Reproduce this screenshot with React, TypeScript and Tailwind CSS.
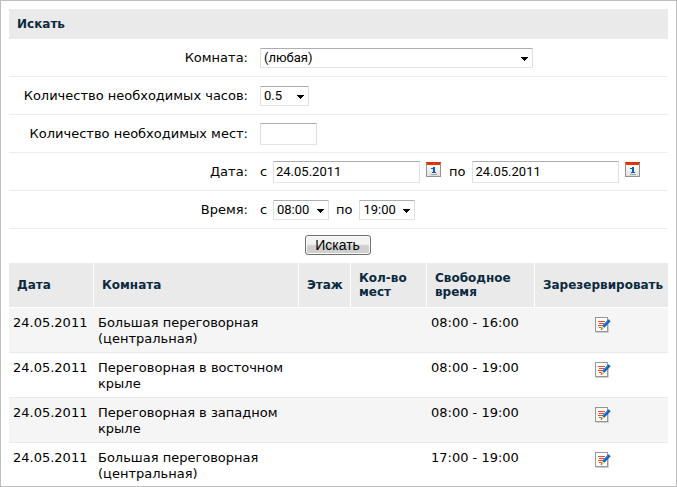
import { useId, type ReactNode } from "react";

type Slot = { date: string; room: string; time: string };

const slots: Slot[] = [
  { date: "24.05.2011", room: "Большая переговорная (центральная)", time: "08:00 - 16:00" },
  { date: "24.05.2011", room: "Переговорная в восточном крыле", time: "08:00 - 19:00" },
  { date: "24.05.2011", room: "Переговорная в западном крыле", time: "08:00 - 19:00" },
  { date: "24.05.2011", room: "Большая переговорная (центральная)", time: "17:00 - 19:00" },
];

const box =
  "rounded-[1px] border border-[#e2e3ea] border-t-[#abadb3] border-x-[#dbdfe6] bg-white font-['Roboto','Liberation_Sans',sans-serif] text-[13px] text-black";

function Select({ id, options, width }: { id: string; options: string[]; width: string }) {
  return (
    <span className={`relative inline-flex ${width}`}>
      <select id={id} className={`h-5 w-full appearance-none pl-[3px] leading-[18px] ${box}`}>
        {options.map((o) => (
          <option key={o}>{o}</option>
        ))}
      </select>
      <svg className="pointer-events-none absolute right-[5px] top-[9px]" width="7" height="4" shapeRendering="crispEdges" aria-hidden="true">
        <path d="M0 0h7v1H0zM1 1h5v1H1zM2 2h3v1H2zM3 3h1v1H3z" />
      </svg>
    </span>
  );
}

function CalendarButton({ label }: { label: string }) {
  const shade = useId();
  return (
    <button type="button" aria-label={label} className="mb-1 ml-[6px] mr-2 shrink-0">
      <svg width="15" height="15" viewBox="0 0 15 15" shapeRendering="crispEdges">
        <defs>
          <linearGradient id={shade} x1="0" y1="0" x2="0" y2="1">
            <stop offset="0" stopColor="#ffffff" />
            <stop offset="1" stopColor="#dedede" />
          </linearGradient>
        </defs>
        <rect width="15" height="15" fill="#929292" />
        <rect x="1" y="3" width="13" height="11" fill={`url(#${shade})`} />
        <rect x="1" y="1" width="13" height="2" fill="#f03208" />
        <rect x="0" y="0" width="15" height="1" fill="#d02f08" />
        <path d="M7 5h2v5H7zM5 6h2v1H5zM6 10h4v1H6z" fill="#0a5cc4" />
        <rect x="5" y="12" width="6" height="1" fill="#a5a5a5" />
      </svg>
    </button>
  );
}

function ReserveIcon() {
  return (
    <svg width="16" height="16" viewBox="0 0 16 16" aria-hidden="true">
      <path d="M1 15.5h12.5V5" fill="none" stroke="#cfcfcf" />
      <rect x=".5" y=".5" width="12" height="14" fill="#fff" stroke="#969696" />
      <path d="M3 4.5h7M4 6.5h5M3 8.5h5M4 10.5h3" stroke="#f04a20" />
      <path d="M14.6 3.2 8.2 9.8" stroke="#0c62c7" strokeWidth="3" />
      <path d="m12.8 3.8-5 5.2" stroke="#4a98e8" strokeWidth=".8" />
      <path d="m6.8 9.3 2.4 2.2-3.4 1.3z" fill="#e3c64a" />
      <path d="m6.3 11-.7 2 1.8-.7z" fill="#4b4b3a" />
    </svg>
  );
}

function Field({ id, label, children }: { id: string; label: string; children: ReactNode }) {
  return (
    <div className="flex h-[38px] items-center gap-3 border-b border-[#ededed]">
      <label htmlFor={id} className="w-[239px] shrink-0 text-right">
        {label}
      </label>
      <div className="flex items-center">{children}</div>
    </div>
  );
}

export default function App() {
  const input = `h-[22px] w-[147px] px-[2px] ${box}`;
  const head =
    "border-b border-r border-white bg-[#eaeaea] px-2 text-left text-[12px] leading-[14px] font-bold text-[#0b2a40] last:border-r-0";
  return (
    <main className="w-full border border-[#bdbdbd] bg-white px-2 pt-2 font-['Verdana','DejaVu_Sans',sans-serif] text-[13px] leading-4 text-black">
      <form onSubmit={(e) => e.preventDefault()}>
        <h1 className="h-[30px] bg-[#eaeaea] px-2 text-[12px] leading-[30px] font-bold text-[#0b2a40]">Искать</h1>
        <Field id="room" label="Комната:">
          <Select id="room" options={["(любая)"]} width="w-[273px]" />
        </Field>
        <Field id="hours" label="Количество необходимых часов:">
          <Select id="hours" options={["0.5"]} width="w-[49px]" />
        </Field>
        <Field id="seats" label="Количество необходимых мест:">
          <input id="seats" type="text" className={`h-[22px] w-[57px] px-[2px] ${box}`} />
        </Field>
        <Field id="date-from" label="Дата:">
          <span className="w-[13px]">с</span>
          <input id="date-from" type="text" defaultValue="24.05.2011" className={input} />
          <CalendarButton label="Выбрать дату начала" />
          <label htmlFor="date-to" className="mr-[7px]">по</label>
          <input id="date-to" type="text" defaultValue="24.05.2011" className={input} />
          <CalendarButton label="Выбрать дату окончания" />
        </Field>
        <Field id="time-from" label="Время:">
          <span className="w-[13px]">с</span>
          <Select id="time-from" options={["08:00"]} width="w-14" />
          <label htmlFor="time-to" className="mx-[7px]">по</label>
          <Select id="time-to" options={["19:00"]} width="w-14" />
        </Field>
        <div className="flex justify-center pt-[6px] pr-[2px] pb-2">
          <button
            type="submit"
            className="h-5 w-[66px] rounded-[3px] border border-[#707070] bg-linear-to-b from-[#f2f2f2] from-45% to-[#cfcfcf] to-55% font-['Liberation_Sans',sans-serif] text-[14px] leading-[18px] shadow-[inset_0_0_0_1px_#fafafa]"
          >
            Искать
          </button>
        </div>
      </form>
      <table className="w-full table-fixed border-separate border-spacing-0">
        <colgroup>
          <col className="w-[85px]" />
          <col className="w-[205px]" />
          <col className="w-[52px]" />
          <col className="w-[76px]" />
          <col className="w-[108px]" />
          <col />
        </colgroup>
        <thead>
          <tr className="h-[45px]">
            <th className={head}>Дата</th>
            <th className={head}>Комната</th>
            <th className={head}>Этаж</th>
            <th className={head}>Кол-во мест</th>
            <th className={head}>Свободное время</th>
            <th className={head}>Зарезервировать</th>
          </tr>
        </thead>
        <tbody className="[&_td]:border-b [&_td]:border-[#e9e9e9] [&_td]:px-1 [&_td]:pt-[7px] [&_td]:pb-[5px] [&_td]:align-top [&_tr:last-child_td]:border-b-0 [&_tr:last-child_td]:pb-1">
          {slots.map((s, i) => (
            <tr key={i} className="odd:bg-[#f5f5f5]">
              <td className="whitespace-nowrap">{s.date}</td>
              <td>{s.room}</td>
              <td />
              <td />
              <td className="whitespace-nowrap">{s.time}</td>
              <td>
                <a href="#reserve" aria-label="Зарезервировать" className="flex justify-center pt-[2px] pl-[2px]">
                  <ReserveIcon />
                </a>
              </td>
            </tr>
          ))}
        </tbody>
      </table>
    </main>
  );
}
